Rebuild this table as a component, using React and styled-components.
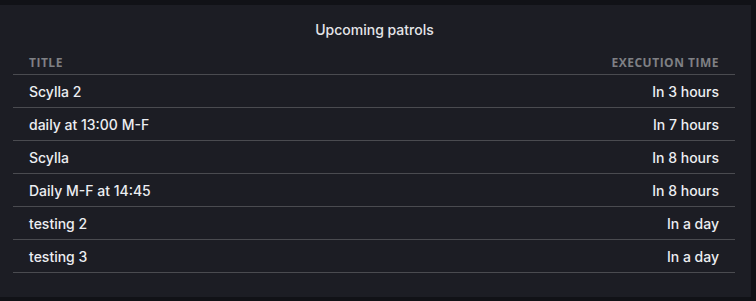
import React from "react"
import styled, { createGlobalStyle } from "styled-components"

const GlobalStyle = createGlobalStyle`
    html, body {
        margin: 0;
        padding: 0;
        background: #111217;
    }
    body {
        font-family: Inter, "Noto Sans", sans-serif;
    }
`

const Page = styled.div`
    padding-top: 5px;
    width: 756px;
    height: 301px;
    box-sizing: border-box;
`

const Panel = styled.section`
    width: 751px;
    height: 292px;
    background: #1c1d24;
    box-sizing: border-box;
    padding: 0 16px 0 13px;
    display: flex;
    flex-direction: column;
`

const PanelTitle = styled.h2`
    margin: 0;
    height: 50px;
    display: flex;
    align-items: center;
    justify-content: center;
    padding-left: 1px;
    padding-bottom: 2px;
    box-sizing: border-box;
    font-family: Inter, sans-serif;
    font-size: 14px;
    font-weight: 500;
    color: #e4e5e9;
`

const Table = styled.table`
    width: 100%;
    border-collapse: collapse;
`

const HeadCell = styled.th`
    height: 19px;
    padding: 0 16px;
    text-align: ${p => (p.$right ? "right" : "left")};
    font-family: "Open Sans", sans-serif;
    font-size: 12px;
    font-weight: 700;
    letter-spacing: 0.5px;
    text-transform: uppercase;
    color: #7f8084;
    border-bottom: 1px solid #4a4b50;
    vertical-align: top;
    line-height: 16px;
`

const Cell = styled.td`
    height: 32px;
    padding: 0 16px;
    text-align: ${p => (p.$right ? "right" : "left")};
    font-family: Inter, sans-serif;
    font-size: 14px;
    font-weight: 500;
    color: #eceef2;
    border-bottom: 1px solid #4a4b50;
    vertical-align: middle;
`

const patrols = [
    { title: "Scylla 2", when: "In 3 hours" },
    { title: "daily at 13:00 M-F", when: "In 7 hours" },
    { title: "Scylla", when: "In 8 hours" },
    { title: "Daily M-F at 14:45", when: "In 8 hours" },
    { title: "testing 2", when: "In a day" },
    { title: "testing 3", when: "In a day" },
]

const App = () => {
    return (
        <Page>
            <GlobalStyle />
            <Panel>
                <PanelTitle>Upcoming patrols</PanelTitle>
                <Table>
                    <thead>
                        <tr>
                            <HeadCell>Title</HeadCell>
                            <HeadCell $right>Execution time</HeadCell>
                        </tr>
                    </thead>
                    <tbody>
                        {patrols.map(p => (
                            <tr key={p.title}>
                                <Cell>{p.title}</Cell>
                                <Cell $right>{p.when}</Cell>
                            </tr>
                        ))}
                    </tbody>
                </Table>
            </Panel>
        </Page>
    )
}

export default App
